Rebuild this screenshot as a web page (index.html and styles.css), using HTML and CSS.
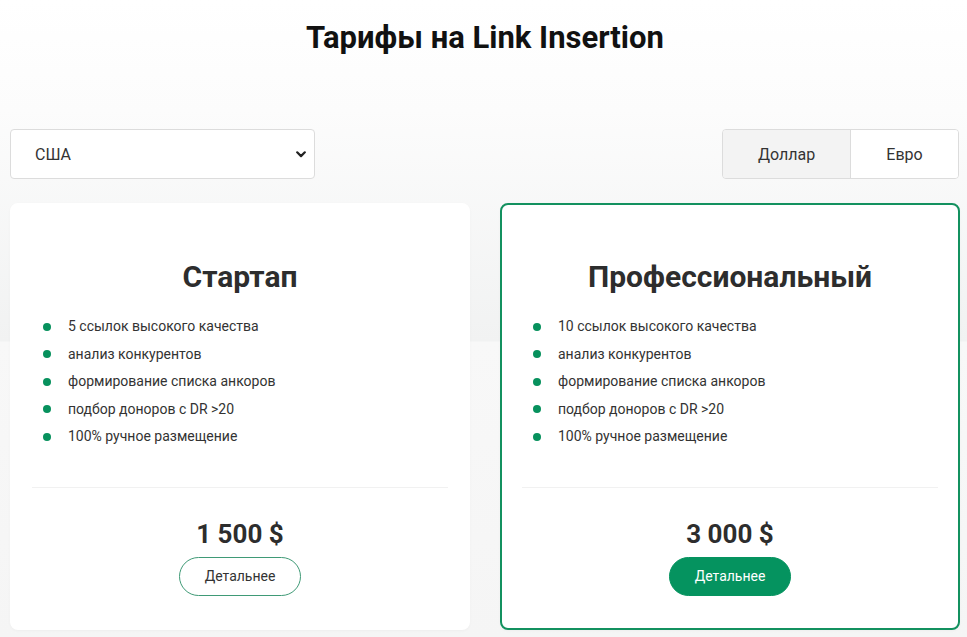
FILE: index.html
```html
<!DOCTYPE html>
<html lang="ru">
<head>
<meta charset="utf-8">
<title>Тарифы на Link Insertion</title>
<link rel="stylesheet" href="styles.css">
</head>
<body>
<main class="page">
  <h1 class="title">Тарифы на Link Insertion</h1>
  <div class="controls">
    <div class="select-wrap">
      <select class="country">
        <option>США</option>
        <option>Германия</option>
      </select>
      <svg class="chev" width="10" height="7" viewBox="0 0 10 7"><path d="M1.2 1.3 L5 5.1 L8.8 1.3" fill="none" stroke="#222" stroke-width="2.2" stroke-linecap="round" stroke-linejoin="round"/></svg>
    </div>
    <div class="currency">
      <button class="cur active">Доллар</button>
      <button class="cur">Евро</button>
    </div>
  </div>
  <div class="cards">
    <section class="card">
      <h2 class="card-title">Стартап</h2>
      <ul class="features">
        <li>5 ссылок высокого качества</li>
        <li>анализ конкурентов</li>
        <li>формирование списка анкоров</li>
        <li>подбор доноров с DR &gt;20</li>
        <li>100% ручное размещение</li>
      </ul>
      <hr class="divider">
      <div class="price">1 500 $</div>
      <button class="more">Детальнее</button>
    </section>
    <section class="card card-pro">
      <h2 class="card-title">Профессиональный</h2>
      <ul class="features">
        <li>10 ссылок высокого качества</li>
        <li>анализ конкурентов</li>
        <li>формирование списка анкоров</li>
        <li>подбор доноров с DR &gt;20</li>
        <li>100% ручное размещение</li>
      </ul>
      <hr class="divider">
      <div class="price">3 000 $</div>
      <button class="more more-filled">Детальнее</button>
    </section>
  </div>
</main>
</body>
</html>
```

FILE: styles.css
```css
* { box-sizing: border-box; }
html, body { margin: 0; padding: 0; }
body {
  font-family: Roboto, "Noto Sans", "Liberation Sans", sans-serif;
  color: #333;
  background: linear-gradient(to bottom, #ffffff 0px, #fcfcfc 110px, #f1f2f2 341px, #f8f8f8 342px, #f5f5f5 637px);
  min-height: 637px;
}
.page {
  width: 950px;
  margin-left: 10px;
  padding-top: 20px;
}
.title {
  margin: 0;
  text-align: center;
  font-size: 31px;
  line-height: 36px;
  font-weight: 700;
  color: #111;
}
.controls {
  margin-top: 73px;
  display: flex;
  justify-content: space-between;
  align-items: center;
}
.select-wrap {
  position: relative;
  width: 305px;
  height: 50px;
}
.country {
  appearance: none;
  -webkit-appearance: none;
  width: 100%;
  height: 100%;
  border: 1px solid #dcdcdc;
  border-radius: 4px;
  background: #fff;
  padding: 0 0 0 24px;
  font-family: inherit;
  font-size: 16px;
  color: #333;
}
.chev {
  position: absolute;
  right: 9px;
  top: 22px;
  pointer-events: none;
}
.currency {
  display: flex;
  height: 50px;
  border: 1px solid #dcdcdc;
  border-radius: 4px;
  overflow: hidden;
  margin-right: 1px;
}
.cur {
  border: 0;
  background: #fff;
  font-family: inherit;
  font-size: 16px;
  color: #333;
  padding: 0;
  width: 107px;
}
.cur.active {
  width: 128px;
  background: #f3f3f3;
  border-right: 1px solid #dcdcdc;
}
.cards {
  margin-top: 24px;
  display: flex;
  gap: 30px;
}
.card {
  flex: 1;
  height: 427px;
  background: #fff;
  border: 2px solid #fff;
  border-radius: 8px;
  padding: 54px 0 0;
  display: flex;
  flex-direction: column;
  align-items: center;
  box-shadow: 0 1px 3px rgba(0,0,0,0.03);
}
.card-pro {
  border-color: #13915f;
}
.card-title {
  margin: 0;
  font-size: 30px;
  line-height: 36px;
  font-weight: 700;
  color: #2d2d2d;
}
.features {
  align-self: stretch;
  list-style: none;
  margin: 18px 0 0;
  padding: 0 0 0 31px;
}
.features li {
  display: flex;
  align-items: center;
  gap: 17px;
  font-size: 14px;
  line-height: 27.5px;
  color: #333;
}
.features li::before {
  content: "";
  width: 8px;
  height: 8px;
  border-radius: 50%;
  background: #07915d;
  flex: none;
}
.divider {
  align-self: stretch;
  margin: 36px 20px 0;
  border: 0;
  border-top: 1px solid #f1f1f1;
}
.price {
  margin-top: 30px;
  font-size: 26px;
  line-height: 32px;
  font-weight: 700;
  color: #2d2d2d;
}
.more {
  margin-top: 7px;
  width: 122px;
  height: 39px;
  border-radius: 20px;
  border: 1px solid #3f9a76;
  background: #fff;
  font-family: inherit;
  font-size: 14px;
  color: #333;
  padding: 0;
}
.more-filled {
  background: #05935f;
  border-color: #05935f;
  color: #fff;
}
```
